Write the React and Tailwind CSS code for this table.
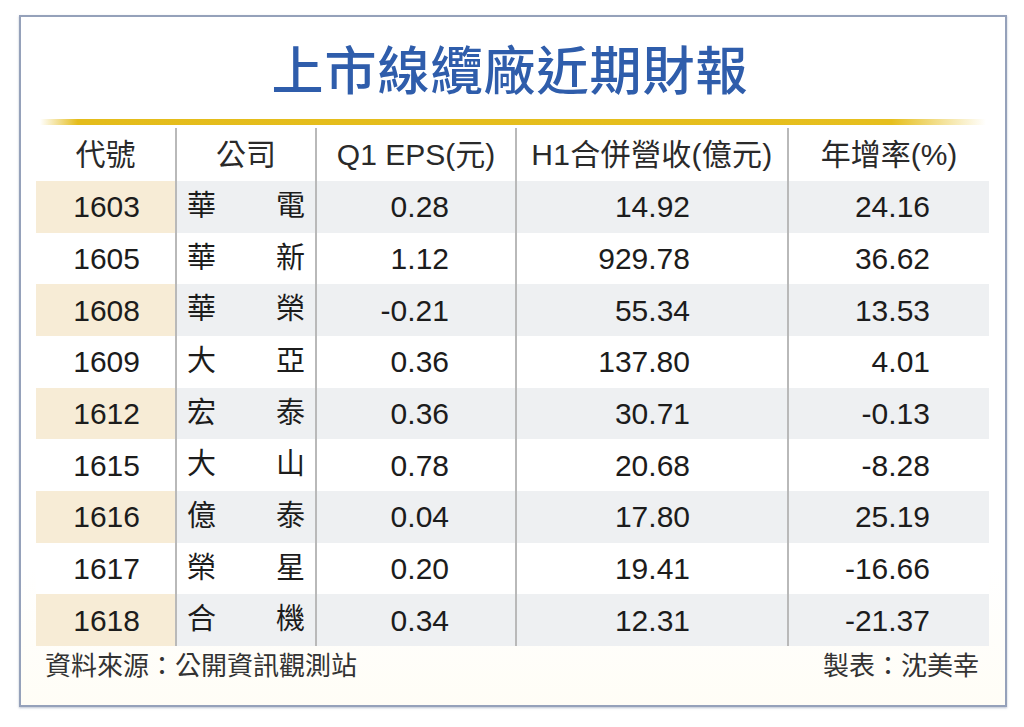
import React from "react";

const rows = [
  ["1603", "華", "電", "0.28", "14.92", "24.16"],
  ["1605", "華", "新", "1.12", "929.78", "36.62"],
  ["1608", "華", "榮", "-0.21", "55.34", "13.53"],
  ["1609", "大", "亞", "0.36", "137.80", "4.01"],
  ["1612", "宏", "泰", "0.36", "30.71", "-0.13"],
  ["1615", "大", "山", "0.78", "20.68", "-8.28"],
  ["1616", "億", "泰", "0.04", "17.80", "25.19"],
  ["1617", "榮", "星", "0.20", "19.41", "-16.66"],
  ["1618", "合", "機", "0.34", "12.31", "-21.37"],
];

const font = {
  fontFamily: '"Liberation Sans", Arial, "Noto Sans CJK TC", sans-serif',
};

export default function App() {
  return (
    <div className="min-h-[727px] w-[1024px] bg-white pt-[15px] pl-[19px]" style={font}>
      <div className="w-[988px] h-[692px] border-2 border-[#95a1ba] bg-[linear-gradient(to_bottom,#ffffff_80%,#fffdf6_100%)] shadow-[0_1px_2px_rgba(120,135,165,0.5)] px-[15px] flex flex-col">
        <div className="h-[102px] flex items-center justify-center pt-[8px] pr-[6px]">
          <div className="text-[52px] leading-none text-[#2f5dab] font-medium tracking-[1px]">
            上市線纜廠近期財報
          </div>
        </div>
        <div className="h-[6px] mx-[4px] bg-[linear-gradient(to_right,rgba(230,190,28,0)_0%,#e4bc1b_4%,#e6bf1e_90%,rgba(230,190,28,0)_100%)]" />
        <div className="mt-[3px] grid grid-cols-[139px_140px_200px_272px_202px] text-[#1c1c1c]">
          <div className="h-[53px] flex items-center justify-center text-[30px] text-[#2a2a2a]">代號</div>
          <div className="h-[53px] flex items-center justify-center text-[30px] text-[#2a2a2a] border-l-2 border-[#b9b9b9]">公司</div>
          <div className="h-[53px] flex items-center justify-center text-[30px] text-[#2a2a2a] border-l-2 border-[#b9b9b9]">Q1 EPS(元)</div>
          <div className="h-[53px] flex items-center justify-center text-[30px] text-[#2a2a2a] border-l-2 border-[#b9b9b9] tracking-[0.3px]">H1合併營收(億元)</div>
          <div className="h-[53px] flex items-center justify-center text-[30px] text-[#2a2a2a] border-l-2 border-[#b9b9b9]">年增率(%)</div>
          {rows.map((r, i) => {
            const odd = i % 2 === 0;
            const a = odd ? "bg-[#f7ecd6]" : "bg-white";
            const b = odd ? "bg-[#eef0f2]" : "bg-white";
            return (
              <React.Fragment key={r[0]}>
                <div className={`h-[51.67px] flex items-center justify-end pr-[35px] text-[30px] ${a}`}>{r[0]}</div>
                <div className={`h-[51.67px] flex items-center justify-between px-[10px] text-[29px] border-l-2 border-[#b9b9b9] ${b}`}>
                  <span>{r[1]}</span>
                  <span>{r[2]}</span>
                </div>
                <div className={`h-[51.67px] flex items-center justify-end pr-[66px] text-[30px] border-l-2 border-[#b9b9b9] ${b}`}>{r[3]}</div>
                <div className={`h-[51.67px] flex items-center justify-end pr-[97px] text-[30px] border-l-2 border-[#b9b9b9] ${b}`}>{r[4]}</div>
                <div className={`h-[51.67px] flex items-center justify-end pr-[59px] text-[30px] border-l-2 border-[#b9b9b9] ${b}`}>{r[5]}</div>
              </React.Fragment>
            );
          })}
        </div>
        <div className="h-[42px] flex items-center justify-between pl-[9px] pr-[11px] text-[26px] text-[#333333]">
          <span>資料來源：公開資訊觀測站</span>
          <span>製表：沈美幸</span>
        </div>
      </div>
    </div>
  );
}
